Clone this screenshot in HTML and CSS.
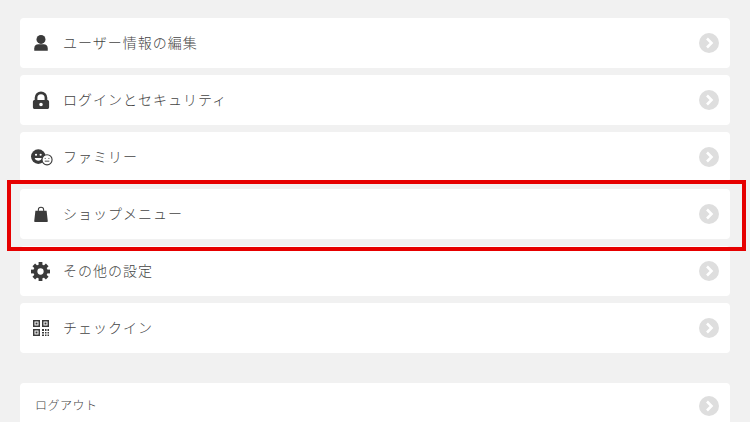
FILE: index.html
```html
<!DOCTYPE html>
<html lang="ja">
<head>
    <meta charset="UTF-8">
    <title>メニュー</title>
    <link rel="stylesheet" href="styles.css">
</head>
<body>
    <div class="menu">
        <a class="row">
            <svg class="icon" viewBox="0 0 20 20"><circle cx="10" cy="6" r="5"/><path d="M2.500 18.500v-2.500C2.500 13 4.500 11.500 7 11.500h6c2.500 0 4.500 1.500 4.500 4.500v2.500z"/></svg>
            <span class="label">ユーザー情報の編集</span>
            <span class="arrow"><svg viewBox="0 0 20 20"><path d="M8 5.500 12.500 10 8 14.500"/></svg></span>
        </a>
        <a class="row">
            <svg class="icon" viewBox="0 0 20 20"><path fill-rule="evenodd" d="M3 10V7.500a7 7 0 0 1 14 0V10c1 0 2 .7 2 2v6c0 1.200-.8 2-2 2H3c-1.200 0-2-.8-2-2v-6c0-1.300 1-2 2-2zm3 0h8V7.500a4 4 0 0 0-8 0zm4 3a2 2 0 1 0 0 4 2 2 0 0 0 0-4z"/></svg>
            <span class="label">ログインとセキュリティ</span>
            <span class="arrow"><svg viewBox="0 0 20 20"><path d="M8 5.500 12.500 10 8 14.500"/></svg></span>
        </a>
        <a class="row">
            <svg class="icon icon-wide" viewBox="0 0 24 18">
                <circle cx="8" cy="8" r="8"/>
                <circle cx="5.500" cy="6" r="1.200" fill="#fff"/><circle cx="10.500" cy="6" r="1.200" fill="#fff"/>
                <path d="M4 9.500c1 4 7 4 8 0z" fill="#fff"/>
                <circle cx="17.500" cy="11.500" r="5.500" fill="#fff" stroke="#3a3a3a" stroke-width="1.200"/>
                <path d="M15.500 9.500v1M19.500 9.500v1M15 13h5" fill="none" stroke="#3a3a3a"/>
            </svg>
            <span class="label">ファミリー</span>
            <span class="arrow"><svg viewBox="0 0 20 20"><path d="M8 5.500 12.500 10 8 14.500"/></svg></span>
        </a>
        <a class="row">
            <svg class="icon icon-bag" viewBox="0 0 20 20"><path fill-rule="evenodd" d="M6 6V5a4 4 0 0 1 8 0v1h3l1.500 13a1 1 0 0 1-1 1h-15a1 1 0 0 1-1-1L3 6zm1.300 0h5.400V5a2.700 2.700 0 0 0-5.400 0z"/></svg>
            <span class="label">ショップメニュー</span>
            <span class="arrow"><svg viewBox="0 0 20 20"><path d="M8 5.500 12.500 10 8 14.500"/></svg></span>
        </a>
        <a class="row">
            <svg class="icon icon-gear" viewBox="0 0 20 20">
                <g class="teeth"><path d="M8 0h4v20H8z"/><path d="M8 0h4v20H8z" transform="rotate(45 10 10)"/><path d="M8 0h4v20H8z" transform="rotate(90 10 10)"/><path d="M8 0h4v20H8z" transform="rotate(135 10 10)"/></g>
                <circle cx="10" cy="10" r="7.500"/>
                <circle cx="10" cy="10" r="3.300" fill="#fff"/>
            </svg>
            <span class="label">その他の設定</span>
            <span class="arrow"><svg viewBox="0 0 20 20"><path d="M8 5.500 12.500 10 8 14.500"/></svg></span>
        </a>
        <a class="row">
            <svg class="icon icon-qr" viewBox="0 0 16 16">
                <path fill-rule="evenodd" d="M0 0h7v7H0zm1.500 1.500v4h4v-4zM9 0h7v7H9zm1.500 1.500v4h4v-4zM0 9h7v7H0zm1.500 1.500v4h4v-4z"/>
                <path d="M2.500 2.500h2v2h-2zM11.500 2.500h2v2h-2zM2.500 11.500h2v2h-2zM9 9h2v2H9zM12 9h1.500v2H12zM14.500 9H16v2h-1.500zM9 12h2v1.500H9zM12 12h1.500v1.500H12zM14.500 12H16v1.500h-1.500zM9 14.500h2V16H9zM12 14.500h1.500V16H12zM14.500 14.500H16V16h-1.500z"/>
            </svg>
            <span class="label">チェックイン</span>
            <span class="arrow"><svg viewBox="0 0 20 20"><path d="M8 5.500 12.500 10 8 14.500"/></svg></span>
        </a>
    </div>

    <a class="row logout">
        <span class="label">ログアウト</span>
        <span class="arrow"><svg viewBox="0 0 20 20"><path d="M8 5.500 12.500 10 8 14.500"/></svg></span>
    </a>

    <!-- 赤枠のハイライト -->
    <div class="highlight"></div>
</body>
</html>
```

FILE: styles.css
```css
html, body { height: 422px; overflow: hidden; }
body { margin: 0; padding: 18px 20px 0; box-sizing: border-box; background-color: #f1f1f1; font-family: "Noto Sans CJK JP", "Noto Sans", sans-serif; color: #444; position: relative; }
.menu { display: flex; flex-direction: column; gap: 7px; }
.row { display: flex; align-items: center; height: 50px; flex: none; background: white; border-radius: 4px; padding: 0 11px 0 12px; }
.icon { width: 18px; height: 18px; margin-right: 13px; flex: none; fill: #3a3a3a; }
.icon-wide { width: 22px; height: 17px; margin-left: -1px; margin-right: 10px; }
.icon-bag { width: 16px; height: 16px; margin-left: 1px; margin-right: 14px; }
.icon-gear { width: 19px; height: 19px; margin-left: -1px; margin-right: 13px; }
.icon-qr { width: 16px; height: 16px; margin-left: 1px; margin-right: 14px; }
.label { flex: 1; font-size: 14px; font-weight: 300; letter-spacing: 1px; line-height: 20px; padding-bottom: 2px; }
.arrow { width: 20px; height: 20px; border-radius: 50%; background-color: #dedede; flex: none; }
.arrow svg { display: block; width: 20px; height: 20px; fill: none; stroke: white; stroke-width: 2.6; }
.logout { margin-top: 30px; height: 46px; padding-left: 15px; }
.logout .label { font-size: 12px; letter-spacing: 0.5px; }
.highlight { position: absolute; left: 7px; top: 180px; width: 739px; height: 71px; box-sizing: border-box; border: 4px solid #e60000; }
```
